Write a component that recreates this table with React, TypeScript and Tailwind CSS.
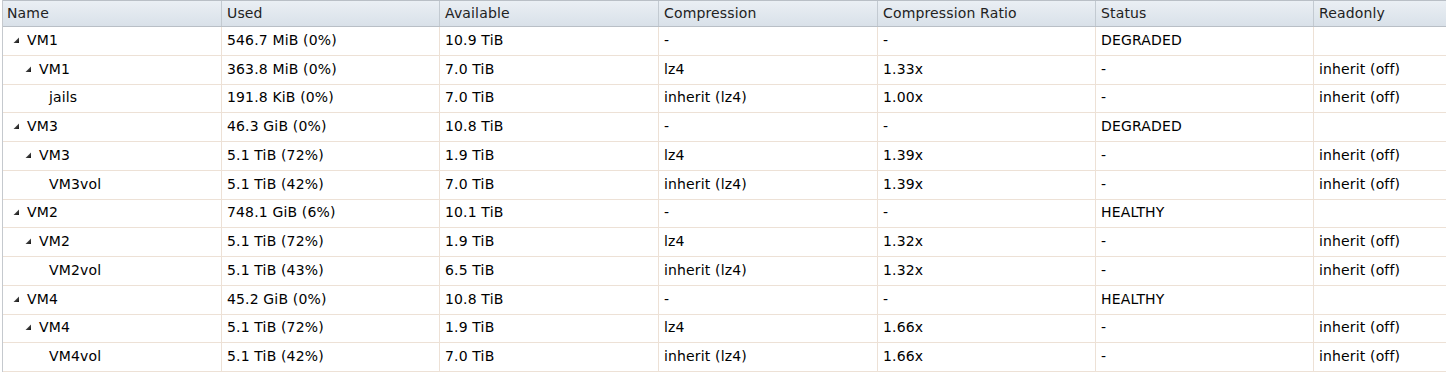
import React from "react";

type Row = {
  level: number;
  name: string;
  used: string;
  avail: string;
  comp: string;
  ratio: string;
  status: string;
  ro: string;
};

const rows: Row[] = [
  { level: 0, name: "VM1", used: "546.7 MiB (0%)", avail: "10.9 TiB", comp: "-", ratio: "-", status: "DEGRADED", ro: "" },
  { level: 1, name: "VM1", used: "363.8 MiB (0%)", avail: "7.0 TiB", comp: "lz4", ratio: "1.33x", status: "-", ro: "inherit (off)" },
  { level: 2, name: "jails", used: "191.8 KiB (0%)", avail: "7.0 TiB", comp: "inherit (lz4)", ratio: "1.00x", status: "-", ro: "inherit (off)" },
  { level: 0, name: "VM3", used: "46.3 GiB (0%)", avail: "10.8 TiB", comp: "-", ratio: "-", status: "DEGRADED", ro: "" },
  { level: 1, name: "VM3", used: "5.1 TiB (72%)", avail: "1.9 TiB", comp: "lz4", ratio: "1.39x", status: "-", ro: "inherit (off)" },
  { level: 2, name: "VM3vol", used: "5.1 TiB (42%)", avail: "7.0 TiB", comp: "inherit (lz4)", ratio: "1.39x", status: "-", ro: "inherit (off)" },
  { level: 0, name: "VM2", used: "748.1 GiB (6%)", avail: "10.1 TiB", comp: "-", ratio: "-", status: "HEALTHY", ro: "" },
  { level: 1, name: "VM2", used: "5.1 TiB (72%)", avail: "1.9 TiB", comp: "lz4", ratio: "1.32x", status: "-", ro: "inherit (off)" },
  { level: 2, name: "VM2vol", used: "5.1 TiB (43%)", avail: "6.5 TiB", comp: "inherit (lz4)", ratio: "1.32x", status: "-", ro: "inherit (off)" },
  { level: 0, name: "VM4", used: "45.2 GiB (0%)", avail: "10.8 TiB", comp: "-", ratio: "-", status: "HEALTHY", ro: "" },
  { level: 1, name: "VM4", used: "5.1 TiB (72%)", avail: "1.9 TiB", comp: "lz4", ratio: "1.66x", status: "-", ro: "inherit (off)" },
  { level: 2, name: "VM4vol", used: "5.1 TiB (42%)", avail: "7.0 TiB", comp: "inherit (lz4)", ratio: "1.66x", status: "-", ro: "inherit (off)" },
];

const headers = ["Name", "Used", "Available", "Compression", "Compression Ratio", "Status", "Readonly"];

function Arrow() {
  return (
    <svg width="7" height="7" viewBox="0 0 7 7" className="shrink-0">
      <defs>
        <linearGradient id="ag" x1="0" y1="0" x2="1" y2="1">
          <stop offset="0" stopColor="#777" />
          <stop offset="1" stopColor="#111" />
        </linearGradient>
      </defs>
      <polygon points="6,0.5 6,6 0.5,6" fill="url(#ag)" />
    </svg>
  );
}

const gridCols = "grid grid-cols-[219px_218px_219px_219px_218px_218px_1fr]";

export default function App() {
  return (
    <div
      className="w-[1446px] h-[375px] overflow-hidden bg-white text-[14px] tracking-[0.15px] text-black"
      style={{ fontFamily: '"DejaVu Sans", Verdana, sans-serif' }}
    >
      <div className="ml-[2px] border-l border-[#c5c9ce]">
        <div className={`${gridCols} h-[27px] border-t border-b border-[#b9bfc6] bg-gradient-to-b from-[#eaeff4] to-[#d9e1e9] text-[#222]`}>
          {headers.map((h, i) => (
            <div
              key={h}
              className={`flex items-center ${i === 0 ? "pl-[4px]" : "pl-[5px]"} ${i < 6 ? "border-r border-[#c3cad1]" : ""}`}
            >
              {h}
            </div>
          ))}
        </div>
        {rows.map((r, idx) => {
          const cells = [r.used, r.avail, r.comp, r.ratio, r.status, r.ro];
          return (
            <div key={idx} className={`${gridCols} h-[28.75px] border-b border-[#ede1d6]`}>
              <div className="flex items-center border-r border-[#ede1d6] pb-[1px]">
                <div
                  className={`flex items-center ${
                    r.level === 0 ? "pl-[10px]" : r.level === 1 ? "pl-[22px]" : "pl-[46px]"
                  }`}
                >
                  {r.level < 2 && <Arrow />}
                  <span className={r.level < 2 ? "ml-[7px]" : ""}>{r.name}</span>
                </div>
              </div>
              {cells.map((c, i) => (
                <div
                  key={i}
                  className={`flex items-center pl-[5px] pb-[1px] ${i < 5 ? "border-r border-[#ede1d6]" : ""}`}
                >
                  {c}
                </div>
              ))}
            </div>
          );
        })}
      </div>
    </div>
  );
}
